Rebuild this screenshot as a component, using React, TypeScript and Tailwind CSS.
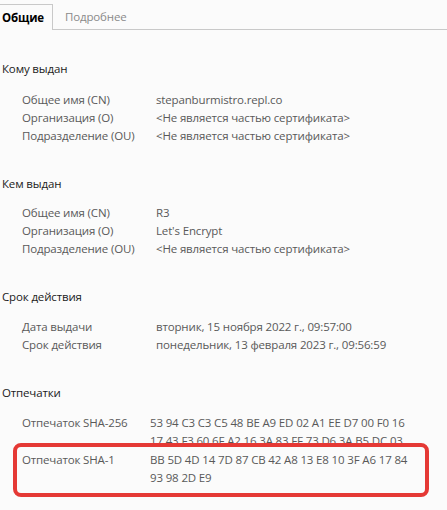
import React from "react";

const font = { fontFamily: '"Open Sans", "Noto Sans", sans-serif' };

function Row({ label, value }: { label: string; value: React.ReactNode }) {
  return (
    <div className="flex h-[18px] items-center">
      <div className="w-[134px] shrink-0 text-[#595959]">{label}</div>
      <div className="whitespace-nowrap text-[#595959]">{value}</div>
    </div>
  );
}

function Heading({ children }: { children: React.ReactNode }) {
  return <div className="h-[18px] flex items-center pl-[2px] text-[#1a1a1a]">{children}</div>;
}

export default function App() {
  return (
    <div
      className="w-[447px] h-[510px] overflow-hidden bg-[#fbfbfb] text-[11.5px] leading-[18px] tracking-[-0.15px]"
      style={font}
    >
      <div className="flex h-[30px] items-end">
        <div className="h-[26px] w-[53px] border-t border-r border-[#c9c9c9] flex items-center pl-[2px] font-bold text-black">
          Общие
        </div>
        <div className="flex-1 h-[26px] border-b border-[#c9c9c9] flex items-center pl-[12px] text-[#8a8a8a]">
          Подробнее
        </div>
      </div>

      <div className="mt-[30px]">
        <Heading>Кому выдан</Heading>
        <div className="mt-[13px] pl-[22px]">
          <Row label="Общее имя (CN)" value="stepanburmistro.repl.co" />
          <Row label="Организация (O)" value="<Не является частью сертификата>" />
          <Row label="Подразделение (OU)" value="<Не является частью сертификата>" />
        </div>
      </div>

      <div className="mt-[30px]">
        <Heading>Кем выдан</Heading>
        <div className="mt-[11px] pl-[22px]">
          <Row label="Общее имя (CN)" value="R3" />
          <Row label="Организация (O)" value="Let's Encrypt" />
          <Row label="Подразделение (OU)" value="<Не является частью сертификата>" />
        </div>
      </div>

      <div className="mt-[30px]">
        <Heading>Срок действия</Heading>
        <div className="mt-[12px] pl-[22px]">
          <Row label="Дата выдачи" value="вторник, 15 ноября 2022 г., 09:57:00" />
          <Row label="Срок действия" value="понедельник, 13 февраля 2023 г., 09:56:59" />
        </div>
      </div>

      <div className="mt-[30px]">
        <Heading>Отпечатки</Heading>
        <div className="mt-[12px] pl-[22px] flex h-[29px] overflow-hidden">
          <div className="w-[128px] shrink-0 text-[#595959]">Отпечаток SHA-256</div>
          <div className="whitespace-nowrap text-[#595959]">
            <div>53 94 C3 C3 C5 48 BE A9 ED 02 A1 EE D7 00 F0 16</div>
            <div>17 43 F3 60 6F A2 16 3A 83 FF 73 D6 3A B5 DC 03</div>
          </div>
        </div>
        <div className="ml-[13px] w-[416px] h-[54px] border-[4px] border-[#e53935] rounded-[8px] bg-[#fbfbfb] pt-[4px] pl-[5px] flex">
          <div className="w-[128px] shrink-0 text-[#595959]">Отпечаток SHA-1</div>
          <div className="whitespace-nowrap text-[#595959]">
            <div>BB 5D 4D 14 7D 87 CB 42 A8 13 E8 10 3F A6 17 84</div>
            <div>93 98 2D E9</div>
          </div>
        </div>
      </div>
    </div>
  );
}
